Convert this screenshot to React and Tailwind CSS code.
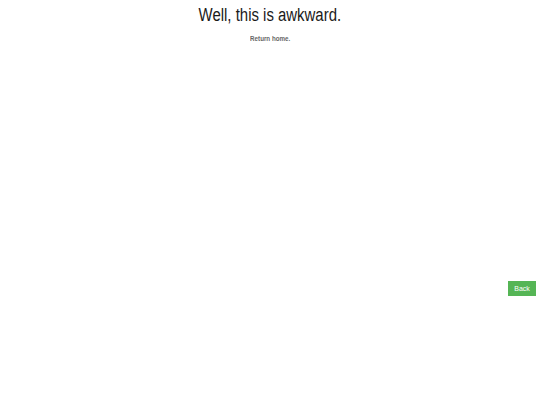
export default function App() {
  return (
    <div className="min-h-[405px] w-[540px] bg-white font-['Liberation_Sans',Arial,sans-serif]">
      <div className="flex flex-col items-center pt-[5px]">
        <h1 className="scale-x-[0.83] text-[18px] leading-[20px] text-[#1a1a1a]">Well, this is awkward.</h1>
        <a className="mt-[9px] scale-x-[0.83] text-[7.5px] leading-[10px] font-bold text-[#666]">Return home.</a>
      </div>
      <div className="mt-[237px] flex justify-end pr-[4px]">
        <button className="h-[15px] w-[28px] bg-[#55b555] text-[7px] leading-[15px] text-white">Back</button>
      </div>
    </div>
  );
}
